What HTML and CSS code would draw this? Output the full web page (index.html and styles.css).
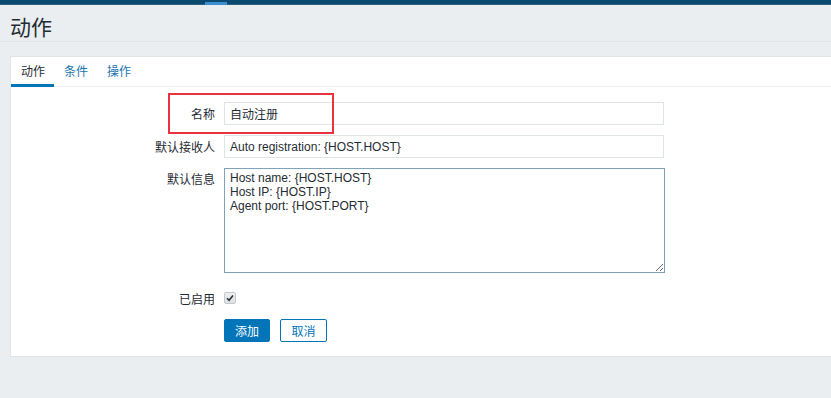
FILE: index.html
```html
<!DOCTYPE html>
<html lang="zh">
<head>
<meta charset="utf-8">
<title>动作</title>
<link rel="stylesheet" href="styles.css">
</head>
<body>
<div class="topbar"><span class="topbar-mark"></span></div>
<div class="header"><h1 class="title">动作</h1></div>
<div class="panel">
  <div class="tabs">
    <span class="tab active">动作</span>
    <span class="tab">条件</span>
    <span class="tab">操作</span>
  </div>
  <div class="form">
    <div class="row row-name">
      <label class="label">名称</label>
      <input class="field" type="text" value="自动注册">
      <span class="highlight"></span>
    </div>
    <div class="row row-subject">
      <label class="label">默认接收人</label>
      <input class="field" type="text" value="Auto registration: {HOST.HOST}">
    </div>
    <div class="row row-message">
      <label class="label label-top">默认信息</label>
      <textarea class="area">Host name: {HOST.HOST}
Host IP: {HOST.IP}
Agent port: {HOST.PORT}</textarea>
    </div>
    <div class="row row-enabled">
      <label class="label">已启用</label>
      <span class="check"><svg width="8" height="8" viewBox="0 0 8 8"><path d="M1 4.2 L3.1 6.3 L7 1.6" fill="none" stroke="#2b3236" stroke-width="1.6"/></svg></span>
    </div>
    <div class="row row-buttons">
      <span class="label"></span>
      <button class="btn btn-primary">添加</button>
      <button class="btn btn-alt">取消</button>
    </div>
  </div>
</div>
</body>
</html>
```

FILE: styles.css
```css
html, body {
  margin: 0;
  padding: 0;
}
body {
  background: #ebeef0;
  font-family: "Liberation Sans", "Noto Sans CJK SC", sans-serif;
  font-size: 12px;
  color: #1f2c33;
  overflow: hidden;
  width: 831px;
  height: 398px;
}
.topbar {
  height: 4px;
  background: #0b4a70;
  border-bottom: 1px solid #2f5f7c;
  position: relative;
}
.topbar-mark {
  position: absolute;
  left: 205px;
  top: 2px;
  width: 22px;
  height: 3px;
  background: #3d8ed1;
}
.header {
  height: 36px;
  border-bottom: 1px solid #e1e5e8;
  margin-bottom: 14px;
  display: flex;
  align-items: flex-end;
}
.title {
  margin: 0 0 1px 10px;
  font-family: "Noto Sans CJK SC", sans-serif;
  font-weight: normal;
  font-size: 21px;
  line-height: 28px;
  color: #1f2c33;
}
.panel {
  margin-left: 10px;
  width: 830px;
  height: 301px;
  background: #ffffff;
  border: 1px solid #dfe4e7;
  box-sizing: border-box;
}
.tabs {
  display: flex;
  height: 30px;
  border-bottom: 1px solid #ebeef0;
  box-sizing: border-box;
}
.tab {
  padding: 0 9px 0 10px;
  line-height: 27px;
  border-bottom: 3px solid transparent;
  color: #1a74ad;
  font-family: "Noto Sans CJK SC", sans-serif;
  font-size: 12px;
  margin-bottom: -1px;
}
.tab.active {
  color: #1f2c33;
  border-bottom-color: #0275b8;
}
.form {
  padding-top: 15px;
  display: flex;
  flex-direction: column;
}
.row {
  display: flex;
  align-items: center;
  gap: 9px;
  position: relative;
}
.label {
  width: 204px;
  flex: none;
  text-align: right;
  font-family: "Noto Sans CJK SC", sans-serif;
  font-size: 12px;
  color: #1f2c33;
}
.label-top {
  align-self: flex-start;
  line-height: 20px;
  padding-top: 1px;
}
.field {
  width: 440px;
  height: 23px;
  box-sizing: border-box;
  border: 1px solid #dfe4e7;
  padding: 0 5px;
  margin: 0;
  font-family: "Liberation Sans", "Noto Sans CJK SC", sans-serif;
  font-size: 12px;
  color: #1f2c33;
  background: #fff;
  outline: none;
}
.row-subject {
  margin-top: 10px;
}
.row-message {
  margin-top: 10px;
}
.area {
  width: 441px;
  height: 105px;
  box-sizing: border-box;
  border: 1px solid #7fa3bd;
  padding: 2px 5px;
  margin: 0;
  font-family: "Liberation Sans", sans-serif;
  font-size: 12px;
  line-height: 14px;
  color: #1f2c33;
  resize: both;
  outline: none;
}
.row-enabled {
  margin-top: 18px;
  height: 14px;
}
.check {
  width: 12px;
  height: 12px;
  box-sizing: border-box;
  border: 1px solid #c3c9cd;
  border-radius: 2px;
  background: linear-gradient(#eef0f2, #dde1e4);
  display: flex;
  align-items: center;
  justify-content: center;
}
.row-buttons {
  margin-top: 14px;
}
.btn {
  height: 23px;
  box-sizing: border-box;
  border-radius: 2px;
  font-family: "Noto Sans CJK SC", sans-serif;
  font-size: 12px;
  padding: 0;
  margin: 0;
  line-height: 20px;
}
.btn-primary {
  width: 46px;
  background: #0275b8;
  border: 1px solid #0275b8;
  color: #ffffff;
}
.btn-alt {
  width: 47px;
  margin-left: 1px;
  background: #ffffff;
  border: 1px solid #0275b8;
  color: #0275b8;
}
.highlight {
  position: absolute;
  left: 157px;
  top: -9px;
  width: 166px;
  height: 41px;
  box-sizing: border-box;
  border: 2px solid #e8333c;
  pointer-events: none;
}
```
